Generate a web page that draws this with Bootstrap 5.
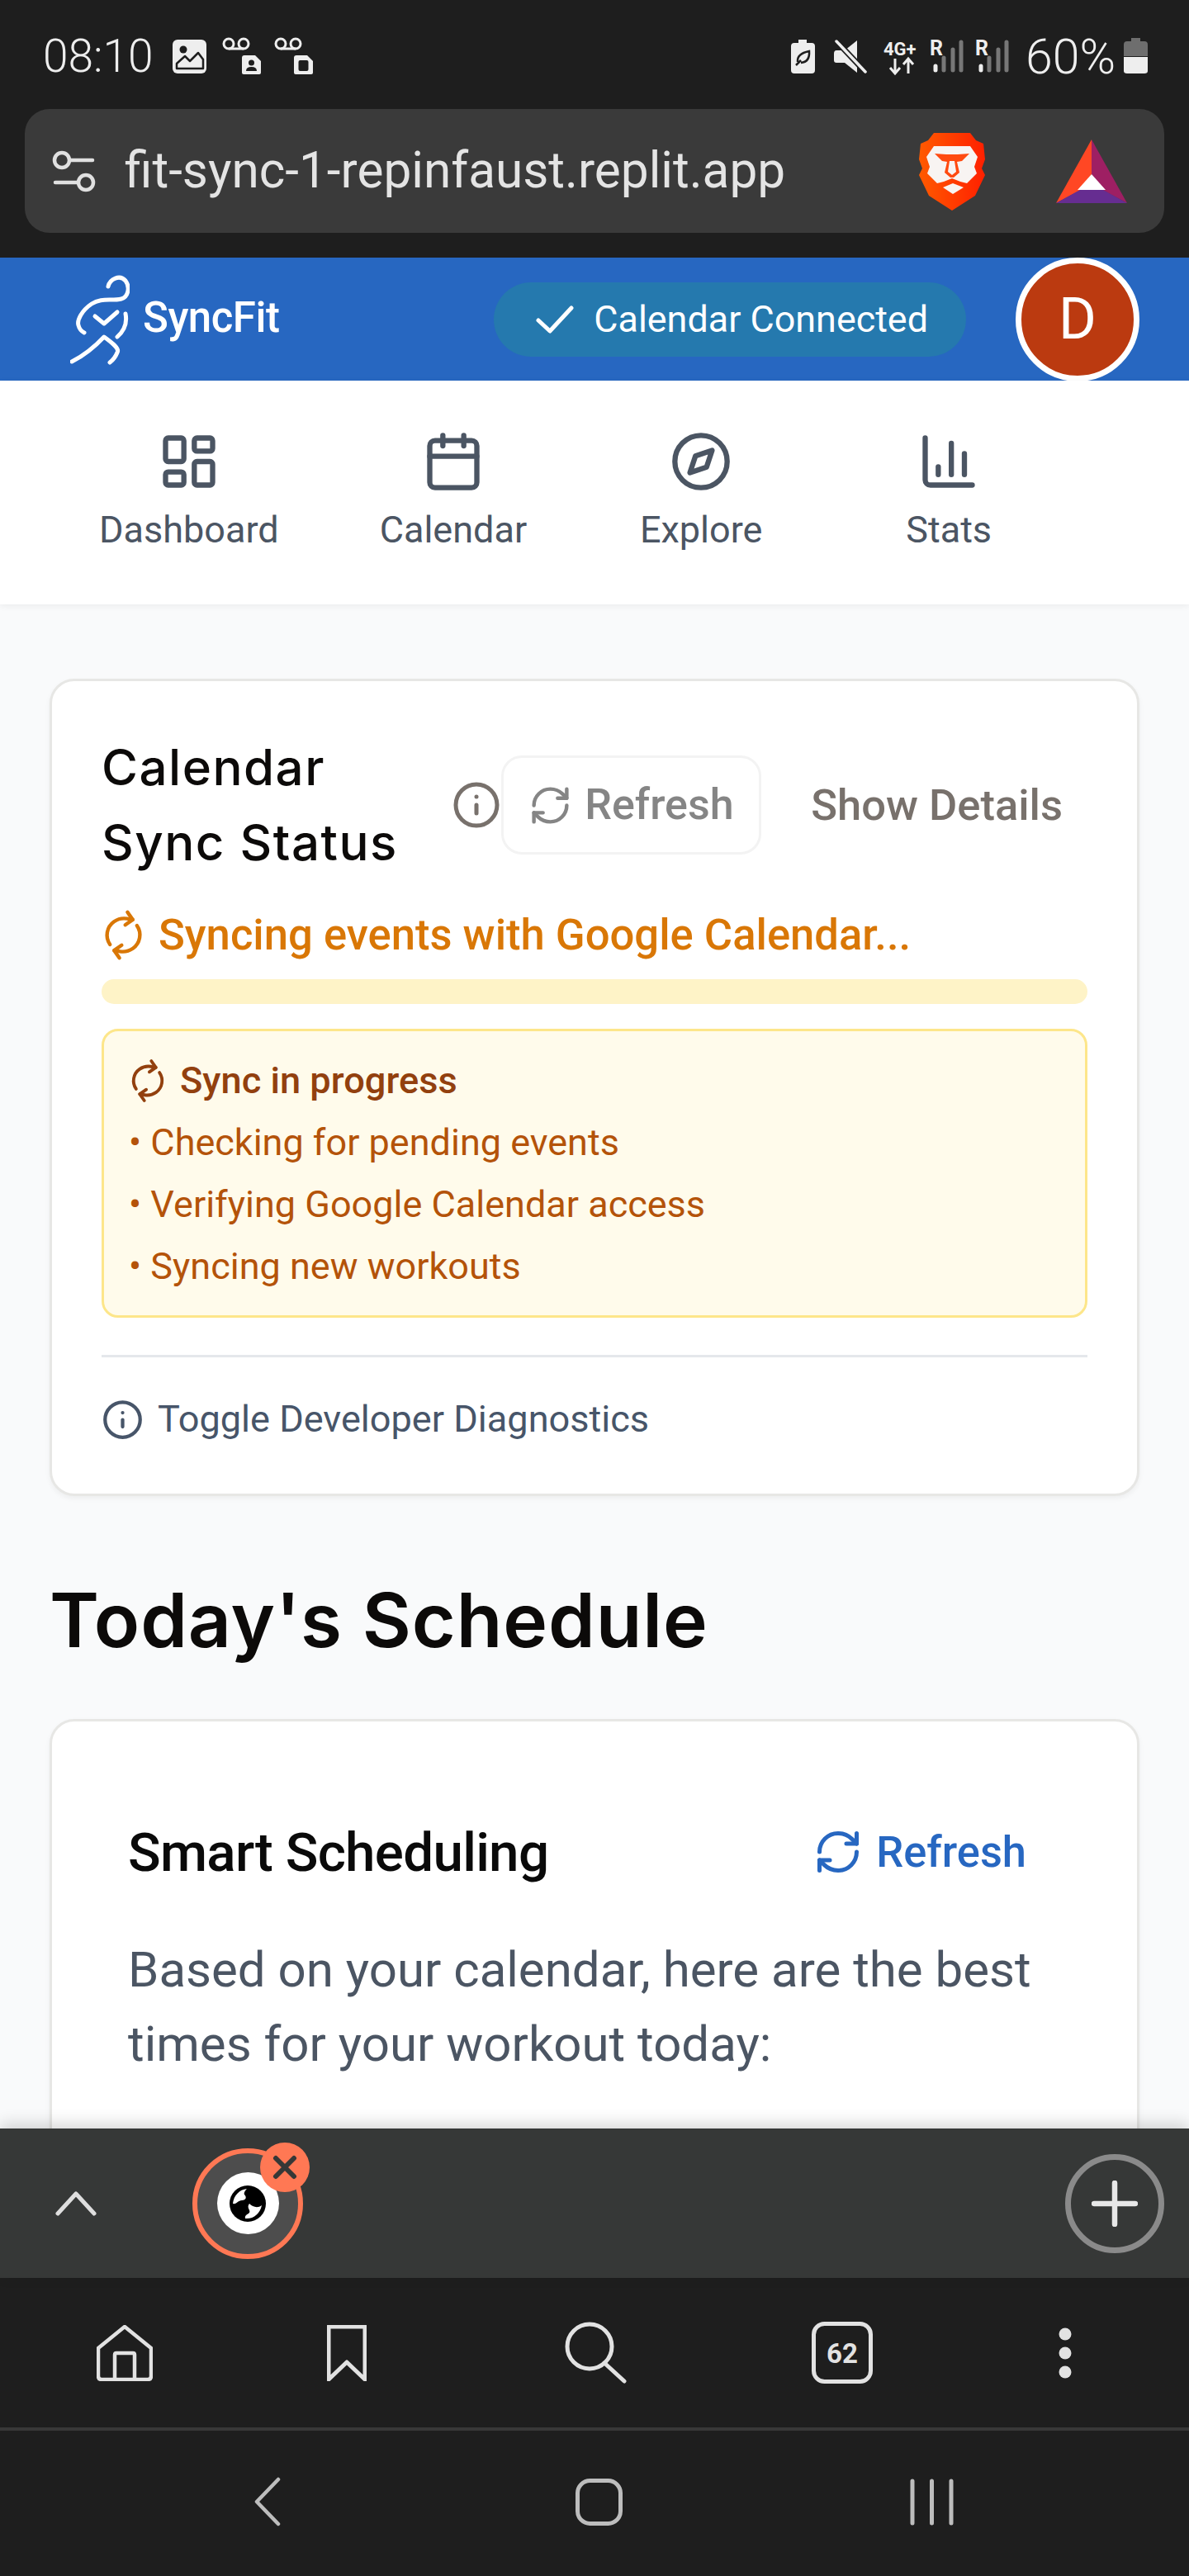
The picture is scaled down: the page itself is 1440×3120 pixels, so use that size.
<!DOCTYPE html>
<html lang="en">
<head>
<meta charset="utf-8">
<title>SyncFit</title>
<link href="https://cdn.jsdelivr.net/npm/bootstrap@5.3.0/dist/css/bootstrap.min.css" rel="stylesheet">
<style>
html,body{height:3120px;overflow:hidden;margin:0}
body{font-family:Roboto,"Liberation Sans",sans-serif;background:#f9fafb;color:#4b5563}
.shell{width:1440px;height:3120px}
.shell>*{flex:none}
svg{flex:none;display:block}
.ln{fill:none;stroke:currentColor;stroke-width:2;stroke-linecap:round;stroke-linejoin:round}
.status-row{height:132px;background:#1e1e1e;color:#eee;padding:4px 50px 0 52px;font-size:55px;font-weight:300;line-height:1}
.status-left{margin-left:23px}
.pct{margin:0 10px 0 17px;font-size:59px}
.url-zone{background:#1e1e1e;padding:0 30px 30px;height:180px}
.url-pill{background:#3a3a3a;height:150px;border-radius:30px;padding:0 45px 0 32px;color:#e4e4e4;font-size:60.3px;font-weight:400;gap:34px}
.lion-gap{margin-left:auto;margin-right:52px}
.brandbar{height:149px;background:#2767c1;padding:0 60px 0 85px;color:#fff}
.brandname{font-size:51px;font-weight:500;margin-left:16px;letter-spacing:-.5px;margin-top:-2px}
.conn{height:90px;background:#2579ae;border-radius:45px;padding:0 46px 0 51px;gap:24px;font-size:44.9px;margin-left:auto;margin-right:60px}
.avatar{width:150px;height:150px;border-radius:50%;background:#bb3a10;border:7px solid #fff;font-size:70px;color:#fff}
.tabsnav{height:271px;background:#fff;padding:0 0 0 59px;box-shadow:0 2px 8px rgba(0,0,0,.06);position:relative;z-index:1;flex-wrap:nowrap}
.navcell{min-width:300px;padding:0 61px;height:271px;padding-top:60px;color:#4b5563;font-size:45px;line-height:66px;gap:12px;white-space:nowrap}
.navcell.first{min-width:336px}
.mainzone{background:#f9fafb;padding:90px 60px 0;overflow:hidden;height:1846px}
.panel{border:3px solid #e7e7e5;border-radius:30px;background:#fff;box-shadow:0 3px 6px rgba(0,0,0,.05);padding:59px 60px 60px}
.panel-title{font-family:Inter,"Liberation Sans",sans-serif;font-size:60px;line-height:91px;font-weight:500;color:#0c0a09;margin:0;letter-spacing:1.5px}
.muted-i{color:#78716c}
.soft-btn{width:315px;height:120px;border:3px solid #f3f3f3;border-radius:25px;padding:0 0 0 30px;gap:15px;color:#858585;font-size:52px;font-weight:500;background:#fff;display:flex;align-items:center;justify-content:flex-start}
.plain-btn{padding:0 30px;margin-left:30px;color:#78716c;font-size:52.5px;font-weight:500;border:0;background:none;white-space:nowrap}
.sync-line{color:#d97706;font-size:52.6px;font-weight:500;line-height:75px;gap:16px;margin-top:29px}
.spin{transform:rotate(-35deg)}
.syncbar{height:30px;border-radius:15px;background:#fef3c7;margin-top:16px}
.syncbox{margin:30px 0 0;padding:22px 30px;background:#fffbeb;border:3px solid #fde68a;border-radius:20px;color:#b45309;font-size:45px;line-height:75px}
.syncbox-head{color:#92400e;font-weight:500;gap:16px;font-size:45.2px}
.rule{height:3px;background:#e5e7eb;opacity:1;margin:45px 0;border:0}
.diag{color:#475569;font-size:45.1px;line-height:60px;gap:17px}
.day-title{font-family:Inter,"Liberation Sans",sans-serif;font-size:91px;font-weight:600;line-height:120px;color:#0c0a09;margin:90px 0 60px;letter-spacing:.9px}
.panel-two{padding:121px 92px 0;height:600px}
.smart{font-size:65.5px;font-weight:500;color:#0a0a0a;margin:0;line-height:68px;letter-spacing:-.7px}
.blue-link{color:#2767c1;font-size:52.4px;font-weight:500;gap:16px;margin-right:42px;margin-top:-2px}
.smart-copy{font-size:60px;line-height:90px;color:#4b5563;margin:58px 0 0}
.tabstrip{height:181px;background:#363837;padding:0 30px 0 67px;position:relative;z-index:2;box-shadow:0 -6px 18px rgba(0,0,0,.16)}
.tabdot{width:134px;height:134px;border-radius:50%;background:#4d4d4d;border:6px solid #ff7854;margin-left:116px;position:relative}
.tabdot-in{width:75px;height:75px;border-radius:50%;background:#fff}
.tabx{position:absolute;width:60px;height:60px;border-radius:50%;background:#ff7854;top:-13px;right:-14px;color:#363837}
.plusring{width:120px;height:120px;border-radius:50%;border:7px solid #8a8a8a;margin-left:auto;color:#e8e8e8}
.botnav{height:181px;background:#1e1e1e;color:#e2e2e2;padding-left:117px}
.m1{margin-left:211px}.m2{margin-left:240px}.m3{margin-left:224px}.m4{margin-left:225px}
.sysdiv{height:4px;background:#383838}
.sysnav{height:176px;background:#1e1e1e;color:#bdbdbd;padding-left:308px;padding-bottom:4px}
.s1{margin-left:357px}.s2{margin-left:348px}
</style>
</head>
<body>
<svg width="0" height="0" class="position-absolute">
  <defs>
    <symbol id="sync" viewBox="0 0 24 24"><path class="ln" d="M3 12a9 9 0 0 1 9-9 9.75 9.75 0 0 1 6.74 2.74L21 8"/><path class="ln" d="M21 3v5h-5"/><path class="ln" d="M21 12a9 9 0 0 1-9 9 9.75 9.75 0 0 1-6.74-2.74L3 16"/><path class="ln" d="M8 16H3v5"/></symbol>
    <symbol id="info" viewBox="0 0 24 24"><circle class="ln" cx="12" cy="12" r="10"/><path class="ln" d="M12 16v-4"/><path class="ln" d="M12 8h.01"/></symbol>
  </defs>
</svg>
<div class="shell d-flex flex-column">

  <div class="status-row d-flex align-items-center">
    <span>08:10</span>
    <svg class="status-left" width="172" height="48" viewBox="0 0 172 48">
      <rect x="0" y="4" width="41" height="41" rx="6" fill="#eee"/>
      <circle cx="13" cy="16" r="4.5" fill="#1e1e1e"/>
      <path d="M5 39V33L15 24L21 30L31 20L37 28V39Z" fill="none" stroke="#1e1e1e" stroke-width="2.5" stroke-linejoin="round"/>
      <g fill="none" stroke="#eee" stroke-width="3"><circle cx="68" cy="9" r="6"/><circle cx="86" cy="9" r="6"/><path d="M68 15H86"/><circle cx="131" cy="9" r="6"/><circle cx="149" cy="9" r="6"/><path d="M131 15H149"/></g>
      <path d="M87 23H100L107 30V44Q107 46 105 46H86Q84 46 84 44V26Q84 23 87 23Z" fill="#eee"/>
      <circle cx="95.500" cy="32" r="3.500" fill="#1e1e1e"/><path d="M89 42Q89 37 95.500 37Q102 37 102 42Z" fill="#1e1e1e"/>
      <path d="M150 23H163L170 30V44Q170 46 168 46H149Q147 46 147 44V26Q147 23 150 23Z" fill="#eee"/>
      <rect x="152.500" y="29" width="12" height="13" rx="2" fill="#1e1e1e"/>
    </svg>
    <svg class="ms-auto" width="268" height="48" viewBox="955 44 268 48">
      <path d="M965 48H975V52H981Q985 52 985 56V85Q985 89 981 89H960Q956 89 956 85V56Q956 52 960 52H965Z" fill="#eee"/>
      <path d="M962 79L968 73M964 75Q963 65 978 62Q979 75 968 76" fill="none" stroke="#1e1e1e" stroke-width="2.500"/>
      <path d="M1036 49V88L1021 76H1011Q1008 76 1008 73V65Q1008 61 1011 61H1021Z" fill="#eee"/>
      <path d="M1011 50L1046 87" stroke="#1e1e1e" stroke-width="7"/>
      <path d="M1011 50L1046 87" stroke="#eee" stroke-width="3.500" stroke-linecap="round"/>
      <text x="1068" y="67" font-family="Roboto" font-size="22" font-weight="700" fill="#eee">4G+</text>
      <path d="M1082 71V88M1076 82L1082 89L1088 82M1098 89V72M1092 78L1098 71L1104 78" fill="none" stroke="#eee" stroke-width="3"/>
      <text x="1124" y="67" font-family="Roboto" font-size="25" font-weight="700" fill="#eee">R</text>
      <text x="1179" y="67" font-family="Roboto" font-size="25" font-weight="700" fill="#eee">R</text>
      <g stroke-width="5" stroke-linecap="round"><path d="M1131 80V85M1186 80V85" stroke="#eee"/><path d="M1141 70V85M1152 60V85M1162 51V85M1196 70V85M1207 60V85M1217 51V85" stroke="#777"/></g>
    </svg>
    <span class="pct">60%</span>
    <svg width="29" height="44" viewBox="0 0 29 44">
      <path d="M9 0H20V4H25Q29 4 29 8V22H0V8Q0 4 4 4H9Z" fill="#6e6e6e"/>
      <path d="M0 23H29V40Q29 43 25 43H4Q0 43 0 40Z" fill="#eee"/>
    </svg>
  </div>

  <div class="url-zone">
    <div class="url-pill d-flex align-items-center">
      <svg width="55" height="54" viewBox="0 0 55 54" fill="none" stroke="#e0e0e0" stroke-width="4.500" stroke-linecap="round">
        <circle cx="13" cy="14" r="9"/><path d="M23 14H50"/><circle cx="42" cy="41" r="9"/><path d="M5 41H32"/>
      </svg>
      <span>fit-sync-1-repinfaust.replit.app</span>
      <svg class="lion-gap" width="80" height="95" viewBox="0 0 80 95">
        <defs><linearGradient id="lg" x1="0" x2="1" y1="0" y2="0"><stop offset="0" stop-color="#ff5a00"/><stop offset="1" stop-color="#ff2000"/></linearGradient></defs>
        <path d="M18 1H62L69 10L78 14L80 33L76 44L80 52L68 77L40 95L12 77L0 52L4 44L0 33L2 14L11 10Z" fill="url(#lg)"/>
        <path d="M9 30L18 17H62L71 30L67 42L70 50L58 62L50 60L40 56L30 60L22 62L10 50L13 42Z" fill="#f8f4f2"/>
        <path d="M19 26L33 27H47L61 26L52 35L46 36L49 49L42 55H38L31 49L34 36L28 35Z" fill="#ff4a10"/>
        <path d="M37 35H43L45 48L40 52L35 48Z" fill="#f8f4f2"/>
        <path d="M29 67L41 62L54 67L41 75Z" fill="#f8f4f2"/>
      </svg>
      <svg width="86" height="77" viewBox="0 0 86 77">
        <path d="M43 0V42L30 61L0 77Z" fill="#ff4724"/><path d="M43 0L86 77L56 61L43 42Z" fill="#9e1f63"/><path d="M0 77L29 61H57L86 77Z" fill="#662d91"/><path d="M43 42L60 61H26Z" fill="#fff"/>
      </svg>
    </div>
  </div>

  <div class="brandbar d-flex align-items-center">
    <svg width="72" height="110" viewBox="0 0 72 110" fill="none" stroke="#fff" stroke-width="5" stroke-linecap="round" stroke-linejoin="round">
      <path d="M46 15C48 6 60 0 67 8C73 16 70 28 62 30C50 33 38 28 26 36C14 44 8 56 10 62C11 66 13 69 17 71"/>
      <path d="M30 51L41 60L57 46"/>
      <path d="M67 48C69 58 66 68 57 76"/>
      <path d="M2 106C14 100 26 92 41 76C52 84 60 90 57 95C55 100 52 104 48 107"/>
    </svg>
    <span class="brandname">SyncFit</span>
    <div class="conn d-flex align-items-center">
      <svg width="46" height="34" viewBox="0 0 46 34" fill="none" stroke="#fff" stroke-width="5" stroke-linecap="round" stroke-linejoin="round"><path d="M3 18L17 31L43 3"/></svg>
      <span>Calendar Connected</span>
    </div>
    <div class="avatar d-flex align-items-center justify-content-center">D</div>
  </div>

  <nav class="nav tabsnav">
    <a class="navcell first d-flex flex-column align-items-center text-decoration-none">
      <svg width="76" height="76" viewBox="0 0 24 24"><rect class="ln" x="3" y="3" width="7" height="9" rx="1"/><rect class="ln" x="14" y="3" width="7" height="5" rx="1"/><rect class="ln" x="14" y="12" width="7" height="9" rx="1"/><rect class="ln" x="3" y="16" width="7" height="5" rx="1"/></svg>
      <span>Dashboard</span>
    </a>
    <a class="navcell d-flex flex-column align-items-center text-decoration-none">
      <svg width="76" height="76" viewBox="0 0 24 24"><path class="ln" d="M8 2v4M16 2v4"/><rect class="ln" x="3" y="4" width="18" height="18" rx="2"/><path class="ln" d="M3 10h18"/></svg>
      <span>Calendar</span>
    </a>
    <a class="navcell d-flex flex-column align-items-center text-decoration-none">
      <svg width="76" height="76" viewBox="0 0 24 24"><circle class="ln" cx="12" cy="12" r="10"/><polygon class="ln" points="16.240 7.760 14.120 14.120 7.760 16.240 9.880 9.880"/></svg>
      <span>Explore</span>
    </a>
    <a class="navcell d-flex flex-column align-items-center text-decoration-none">
      <svg width="76" height="76" viewBox="0 0 24 24"><path class="ln" d="M3 3v16a2 2 0 0 0 2 2h16"/><path class="ln" d="M18 17V9"/><path class="ln" d="M13 17V5"/><path class="ln" d="M8 17v-3"/></svg>
      <span>Stats</span>
    </a>
  </nav>

  <main class="mainzone">
    <section class="card panel">
      <div class="d-flex align-items-center">
        <h3 class="panel-title">Calendar<br>Sync Status</h3>
        <div class="d-flex align-items-center ms-auto">
          <svg class="muted-i" width="60" height="60" viewBox="0 0 24 24"><use href="#info"/></svg>
          <button class="btn soft-btn" type="button"><svg width="53" height="53" viewBox="0 0 24 24"><use href="#sync"/></svg>Refresh</button>
          <button class="btn plain-btn" type="button">Show Details</button>
        </div>
      </div>
      <div class="sync-line d-flex align-items-center">
        <svg class="spin" width="53" height="53" viewBox="0 0 24 24"><use href="#sync"/></svg>
        <span>Syncing events with Google Calendar...</span>
      </div>
      <div class="progress syncbar"></div>
      <div class="syncbox">
        <div class="syncbox-head d-flex align-items-center">
          <svg class="spin" width="46" height="46" viewBox="0 0 24 24"><use href="#sync"/></svg>
          <span>Sync in progress</span>
        </div>
        <div>• Checking for pending events</div>
        <div>• Verifying Google Calendar access</div>
        <div>• Syncing new workouts</div>
      </div>
      <hr class="rule">
      <div class="diag d-flex align-items-center">
        <svg width="51" height="51" viewBox="0 0 24 24"><use href="#info"/></svg>
        <span>Toggle Developer Diagnostics</span>
      </div>
    </section>

    <h2 class="day-title">Today's Schedule</h2>

    <section class="card panel panel-two">
      <div class="d-flex align-items-center justify-content-between">
        <h3 class="smart">Smart Scheduling</h3>
        <a class="blue-link d-flex align-items-center text-decoration-none"><svg width="60" height="60" viewBox="0 0 24 24"><use href="#sync"/></svg>Refresh</a>
      </div>
      <p class="smart-copy">Based on your calendar, here are the best times for your workout today:</p>
    </section>
  </main>

  <div class="tabstrip d-flex align-items-center">
    <svg width="50" height="30" viewBox="0 0 50 30" fill="none" stroke="#dedede" stroke-width="5" stroke-linecap="round" stroke-linejoin="round"><path d="M3 27L25 3L47 27"/></svg>
    <div class="tabdot d-flex align-items-center justify-content-center">
      <div class="tabdot-in d-flex align-items-center justify-content-center">
        <svg width="44" height="44" viewBox="0 0 44 44"><circle cx="22" cy="22" r="22" fill="#000"/><path d="M21 4C12 5 5 12 4 22C9 23 10 18 15 18C20 18 21 14 18 11C17 9 19 6 21 4Z" fill="#fff"/><path d="M39 24C34 28 28 26 24 22C20 27 26 30 24 33C22 35 18 36 19 40C29 41 37 34 39 24Z" fill="#fff"/></svg>
      </div>
      <div class="tabx d-flex align-items-center justify-content-center">
        <svg width="30" height="30" viewBox="0 0 30 30" fill="none" stroke="currentColor" stroke-width="6" stroke-linecap="round"><path d="M4 4L26 26M26 4L4 26"/></svg>
      </div>
    </div>
    <div class="plusring d-flex align-items-center justify-content-center">
      <svg width="56" height="56" viewBox="0 0 56 56" stroke="currentColor" stroke-width="6.500" stroke-linecap="round"><path d="M28 3V53M3 28H53"/></svg>
    </div>
  </div>

  <div class="botnav d-flex align-items-center">
    <svg width="68" height="68" viewBox="0 0 68 68" fill="none" stroke="currentColor" stroke-width="4.500" stroke-linejoin="round"><path d="M34 2L66 28V62Q66 66 62 66H6Q2 66 2 62V28Z"/><path d="M22 66V36Q22 34 24 34H44Q46 34 46 36V66"/></svg>
    <svg class="m1" width="48" height="68" viewBox="0 0 48 68" fill="none" stroke="currentColor" stroke-width="5" stroke-linejoin="round"><path d="M2 2H46V66L24 45L2 66Z"/></svg>
    <svg class="m2" width="75" height="75" viewBox="0 0 75 75" fill="none" stroke="currentColor" stroke-width="5" stroke-linecap="round"><circle cx="30" cy="30" r="27"/><path d="M48 50L72 72"/></svg>
    <svg class="m3" width="74" height="75" viewBox="0 0 74 75"><rect x="2.500" y="2.500" width="69" height="70" rx="13" fill="none" stroke="currentColor" stroke-width="5"/><text x="37" y="50" text-anchor="middle" font-family="Roboto" font-size="33" font-weight="700" fill="currentColor">62</text></svg>
    <svg class="m4" width="16" height="62" viewBox="0 0 16 62" fill="currentColor"><circle cx="8" cy="8" r="7.500"/><circle cx="8" cy="31" r="7.500"/><circle cx="8" cy="54" r="7.500"/></svg>
  </div>
  <div class="sysdiv"></div>
  <div class="sysnav d-flex align-items-center">
    <svg width="32" height="60" viewBox="0 0 32 60" fill="none" stroke="currentColor" stroke-width="4.500" stroke-linecap="round" stroke-linejoin="round"><path d="M29 3L3 30L29 57"/></svg>
    <svg class="s1" width="57" height="57" viewBox="0 0 57 57" fill="none" stroke="currentColor" stroke-width="5"><rect x="2.500" y="2.500" width="52" height="52" rx="15"/></svg>
    <svg class="s2" width="53" height="57" viewBox="0 0 53 57" stroke="currentColor" stroke-width="5" stroke-linecap="round"><path d="M3 3V54M26.500 3V54M50 3V54"/></svg>
  </div>
</div>
<script src="https://cdn.jsdelivr.net/npm/bootstrap@5.3.0/dist/js/bootstrap.bundle.min.js"></script>
</body>
</html>
